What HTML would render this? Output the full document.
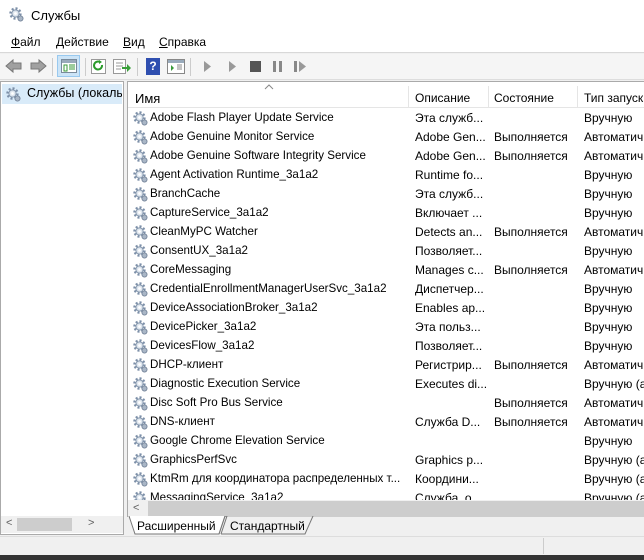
<!DOCTYPE html>
<html><head><meta charset="utf-8"><style>
*{margin:0;padding:0;box-sizing:border-box}
body{width:644px;height:560px;overflow:hidden;background:#f0f0f0;font-family:"Liberation Sans",sans-serif;font-size:12px;color:#000;position:relative}
.abs{position:absolute}
.gear{position:absolute;width:15px;height:15px}
.row{position:absolute;left:0;height:19px;width:520px;white-space:nowrap}
.row span{position:absolute;top:2px}
</style></head><body>
<svg width="0" height="0" style="position:absolute"><defs>
<g id="g"><circle cx="6.5" cy="6.5" r="5" fill="none" stroke="#7c8fa8" stroke-width="2.4" stroke-dasharray="2 1.9"/><circle cx="6.5" cy="6.5" r="3.6" fill="#dfe6ee" stroke="#8597ad" stroke-width="1"/><circle cx="6.5" cy="6.5" r="1.4" fill="#fff"/><circle cx="11.5" cy="11.5" r="2.6" fill="#a9b6c6" stroke="#6f7f95" stroke-width="0.8"/></g>
</defs></svg>
<div class="abs" style="left:0;top:0;width:644px;height:31px;background:#fff"></div>
<svg class="gear" style="left:9px;top:7px" viewBox="0 0 15 15"><use href="#g"/></svg>
<div class="abs" style="left:31px;top:8px;font-size:13px">Службы</div>
<div class="abs" style="left:0;top:31px;width:644px;height:22px;background:#fff;border-bottom:1px solid #d8d8d8"></div>
<div class="abs" style="left:11px;top:35px"><u>Ф</u>айл</div>
<div class="abs" style="left:56px;top:35px"><u>Д</u>ействие</div>
<div class="abs" style="left:123px;top:35px"><u>В</u>ид</div>
<div class="abs" style="left:159px;top:35px"><u>С</u>правка</div>
<div class="abs" style="left:0;top:54px;width:644px;height:26px;background:#f5f5f5;border-bottom:1px solid #ddd"></div>
<svg class="abs" style="left:4px;top:58px" width="44" height="16"><path d="M2 8 L9 2 V5 H17 V11 H9 V14Z" fill="#a0a0a0" stroke="#777"/><path d="M42 8 L35 2 V5 H27 V11 H35 V14Z" fill="#a0a0a0" stroke="#777"/></svg>
<div class="abs" style="left:52px;top:58px;width:1px;height:18px;background:#ccc"></div>
<div class="abs" style="left:57px;top:55px;width:23px;height:22px;background:#cce4f7;border:1px solid #99c9ef"></div>
<svg class="abs" style="left:61px;top:59px" width="16" height="14"><rect x="0.5" y="0.5" width="15" height="13" fill="#fff" stroke="#7a8a9a"/><rect x="1" y="1" width="14" height="3" fill="#9ab"/><path d="M3 6h3v6H3z M8 6h6 M8 8h6 M8 10h6" stroke="#3a9a3a" fill="none"/></svg>
<div class="abs" style="left:85px;top:58px;width:1px;height:18px;background:#ccc"></div>
<svg class="abs" style="left:91px;top:59px" width="16" height="15"><rect x="0.5" y="0.5" width="14" height="14" fill="#fff" stroke="#999"/><path d="M11 6a4 4 0 1 1-2-3" stroke="#2a9a2a" stroke-width="2" fill="none"/><path d="M8 1l3 2-3 2z" fill="#2a9a2a"/></svg>
<svg class="abs" style="left:113px;top:59px" width="18" height="15"><rect x="0.5" y="0.5" width="12" height="14" fill="#fff" stroke="#999"/><path d="M3 4h7M3 7h7M3 10h5" stroke="#999"/><path d="M9 8h5V5l4 4-4 4v-3H9z" fill="#3aa03a"/></svg>
<div class="abs" style="left:137px;top:58px;width:1px;height:18px;background:#ccc"></div>
<div class="abs" style="left:146px;top:58px;width:14px;height:17px;background:#2f4fb0;color:#fff;font-weight:bold;text-align:center;line-height:17px">?</div>
<svg class="abs" style="left:167px;top:59px" width="18" height="15"><rect x="0.5" y="0.5" width="17" height="14" fill="#fff" stroke="#888"/><rect x="1" y="1" width="16" height="3" fill="#9ab"/><path d="M4 6v6l3-3z" fill="#3a9a3a"/><path d="M10 6h5M10 8h5M10 10h5" stroke="#888"/></svg>
<div class="abs" style="left:190px;top:58px;width:1px;height:18px;background:#ccc"></div>
<svg class="abs" style="left:203px;top:60px" width="110" height="13"><path d="M1 1l7 5.5-7 5.5z" fill="#999"/><path d="M26 1l7 5.5-7 5.5z" fill="#999"/><rect x="47" y="1" width="11" height="11" fill="#555"/><rect x="70" y="1" width="3" height="11" fill="#888"/><rect x="76" y="1" width="3" height="11" fill="#888"/><rect x="91" y="1" width="3" height="11" fill="#888"/><path d="M96 1l7 5.5-7 5.5z" fill="#999"/></svg>
<div class="abs" style="left:0;top:81px;width:124px;height:454px;background:#fff;border:1px solid #aaa"></div>
<div class="abs" style="left:2px;top:84px;width:120px;height:20px;background:#d9ebf9"></div>
<svg class="gear" style="left:6px;top:87px" viewBox="0 0 15 15"><use href="#g"/></svg>
<div class="abs" style="left:27px;top:86px;font-size:12.5px;white-space:nowrap;width:95px;overflow:hidden">Службы (локалы</div>
<div class="abs" style="left:1px;top:516px;width:122px;height:17px;background:#f0f0f0"></div>
<div class="abs" style="left:17px;top:518px;width:55px;height:13px;background:#cdcdcd"></div>
<div class="abs" style="left:6px;top:517px;color:#606060;font-size:11px">&lt;</div>
<div class="abs" style="left:88px;top:517px;color:#606060;font-size:11px">&gt;</div>
<div class="abs" style="left:127px;top:81px;width:517px;height:436px;background:#fff;border-left:1px solid #aaa;border-top:1px solid #aaa;overflow:hidden">
 <div class="abs" style="left:0;top:0;width:520px;height:26px;border-bottom:1px solid #e5e5e5"></div>
 <svg class="abs" style="left:136px;top:2px" width="10" height="6"><path d="M1 5l4-4 4 4" stroke="#888" fill="none"/></svg>
 <div class="abs" style="left:7px;top:9px;font-size:13px">Имя</div>
 <div class="abs" style="left:280px;top:4px;width:1px;height:22px;background:#e5e5e5"></div>
 <div class="abs" style="left:287px;top:9px">Описание</div>
 <div class="abs" style="left:360px;top:4px;width:1px;height:22px;background:#e5e5e5"></div>
 <div class="abs" style="left:366px;top:9px">Состояние</div>
 <div class="abs" style="left:449px;top:4px;width:1px;height:22px;background:#e5e5e5"></div>
 <div class="abs" style="left:456px;top:9px;white-space:nowrap">Тип запуск</div>
 <div id="rows"></div>
 <div class="abs" style="left:0;top:418px;width:520px;height:18px;background:#f0f0f0"></div>
 <div class="abs" style="left:20px;top:419px;width:500px;height:16px;background:#cdcdcd"></div>
 <div class="abs" style="left:5px;top:420px;color:#606060;font-size:11px">&lt;</div>
</div>
<svg class="abs" style="left:127px;top:516px" width="200" height="20"><path d="M2 0 L8 18 H92 L98 0" fill="#fff" stroke="#777"/><path d="M92 18 L98 0 L100 0 L94 18 M94 18 H178 L186 0" fill="none" stroke="#777"/></svg>
<div class="abs" style="left:137px;top:519px">Расширенный</div>
<div class="abs" style="left:230px;top:519px">Стандартный</div>
<div class="abs" style="left:0;top:536px;width:644px;height:19px;background:#f0f0f0;border-top:1px solid #ddd"></div>
<div class="abs" style="left:543px;top:538px;width:1px;height:16px;background:#ccc"></div>
<div class="abs" style="left:0;top:555px;width:644px;height:5px;background:#333"></div>
<script>
var d=[["Adobe Flash Player Update Service","Эта служб...","","Вручную"],
["Adobe Genuine Monitor Service","Adobe Gen...","Выполняется","Автоматич"],
["Adobe Genuine Software Integrity Service","Adobe Gen...","Выполняется","Автоматич"],
["Agent Activation Runtime_3a1a2","Runtime fo...","","Вручную"],
["BranchCache","Эта служб...","","Вручную"],
["CaptureService_3a1a2","Включает ...","","Вручную"],
["CleanMyPC Watcher","Detects an...","Выполняется","Автоматич"],
["ConsentUX_3a1a2","Позволяет...","","Вручную"],
["CoreMessaging","Manages c...","Выполняется","Автоматич"],
["CredentialEnrollmentManagerUserSvc_3a1a2","Диспетчер...","","Вручную"],
["DeviceAssociationBroker_3a1a2","Enables ap...","","Вручную"],
["DevicePicker_3a1a2","Эта польз...","","Вручную"],
["DevicesFlow_3a1a2","Позволяет...","","Вручную"],
["DHCP-клиент","Регистрир...","Выполняется","Автоматич"],
["Diagnostic Execution Service","Executes di...","","Вручную (а"],
["Disc Soft Pro Bus Service","","Выполняется","Автоматич"],
["DNS-клиент","Служба D...","Выполняется","Автоматич"],
["Google Chrome Elevation Service","","","Вручную"],
["GraphicsPerfSvc","Graphics p...","","Вручную (а"],
["KtmRm для координатора распределенных т...","Координи...","","Вручную (а"],
["MessagingService_3a1a2","Служба, о...","","Вручную (а"]];
var h="";d.forEach(function(r,i){var t=27+i*19;
h+='<div class="row" style="top:'+t+'px"><svg class="gear" style="left:5px;top:2px" viewBox="0 0 15 15"><use href="#g"/></svg><span style="left:22px;font-size:11.6px">'+r[0]+'</span><span style="left:287px">'+r[1]+'</span><span style="left:366px">'+r[2]+'</span><span style="left:456px">'+r[3]+'</span></div>';});
document.getElementById("rows").innerHTML=h;
</script>
</body></html>
